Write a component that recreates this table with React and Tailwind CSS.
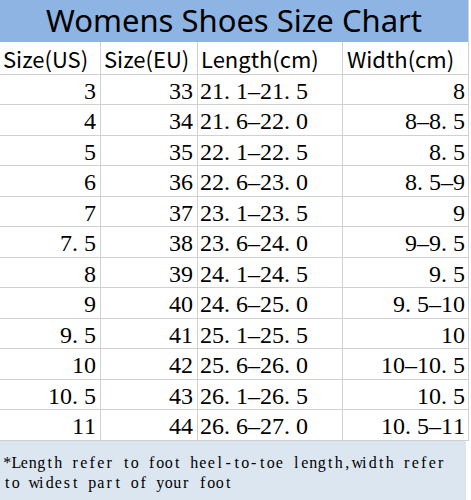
import React from 'react';

const rows = [
  ['3', '33', '21.1-21.5', '8'],
  ['4', '34', '21.6-22.0', '8-8.5'],
  ['5', '35', '22.1-22.5', '8.5'],
  ['6', '36', '22.6-23.0', '8.5-9'],
  ['7', '37', '23.1-23.5', '9'],
  ['7.5', '38', '23.6-24.0', '9-9.5'],
  ['8', '39', '24.1-24.5', '9.5'],
  ['9', '40', '24.6-25.0', '9.5-10'],
  ['9.5', '41', '25.1-25.5', '10'],
  ['10', '42', '25.6-26.0', '10-10.5'],
  ['10.5', '43', '26.1-26.5', '10.5'],
  ['11', '44', '26.6-27.0', '10.5-11'],
];

// SimSun-like fixed-width digits: every char gets a half-width cell
function Mono({ text }) {
  return (
    <span className="inline-flex">
      {text.split('').map((c, i) => (
        <span
          key={i}
          className={c === '.' ? 'inline-block w-[12px] text-left' : 'inline-block w-[12px] text-center'}
        >
          {c === '-' ? '\u2013' : c}
        </span>
      ))}
    </span>
  );
}

// fixed-width serif line for the note
function NoteLine({ text }) {
  return (
    <div className="flex h-[20px] items-center">
      {text.split('').map((c, i) => (
        <span key={i} className="inline-block w-[8.5px] text-center">
          {c === ' ' ? '\u00a0' : c}
        </span>
      ))}
    </div>
  );
}

const serif = { fontFamily: '"Liberation Serif", "Times New Roman", serif' };

export default function App() {
  return (
    <div className="w-[471px] h-[500px] bg-white overflow-hidden text-black">
      <div className="w-[469px] border-r border-[#d0d0d0]">
        {/* Title */}
        <div
          className="h-[42px] bg-[#8db4e2] flex items-center justify-center text-[31px] leading-none pb-[2px]"
          style={{ fontFamily: '"Noto Sans", "Open Sans", sans-serif' }}
        >
          Womens Shoes Size Chart
        </div>

        {/* Header */}
        <div
          className="grid grid-cols-[101px_97px_145px_126px] h-[33px] border-b border-[#d0d0d0] text-[22px] leading-none"
          style={{ fontFamily: '"Noto Sans CJK SC", "Noto Sans", sans-serif' }}
        >
          <div className="border-r border-[#d0d0d0] flex items-center pl-[3px]">Size(US)</div>
          <div className="border-r border-[#d0d0d0] flex items-center pl-[3px]">Size(EU)</div>
          <div className="border-r border-[#d0d0d0] flex items-center pl-[3px]">Length(cm)</div>
          <div className="flex items-center pl-[4px]">Width(cm)</div>
        </div>

        {/* Rows */}
        {rows.map((r, i) => (
          <div
            key={r[0]}
            className={
              (i % 2 === 0 ? 'h-[30px] ' : 'h-[31px] ') +
              'grid grid-cols-[101px_97px_145px_126px] border-b border-[#d0d0d0] text-[24px] leading-none'
            }
            style={serif}
          >
            <div className="border-r border-[#d0d0d0] flex items-center justify-end pr-[4px] pt-[2px]">
              <Mono text={r[0]} />
            </div>
            <div className="border-r border-[#d0d0d0] flex items-center justify-end pr-[4px] pt-[2px]">
              <Mono text={r[1]} />
            </div>
            <div className="border-r border-[#d0d0d0] flex items-center pl-[2px] pt-[2px]">
              <Mono text={r[2]} />
            </div>
            <div className="flex items-center justify-end pr-[4px] pt-[2px]">
              <Mono text={r[3]} />
            </div>
          </div>
        ))}
      </div>

      {/* Note */}
      <div
        className="w-[466px] h-[60px] bg-[#dce6f1] pt-[12px] pl-[3px] text-[16px] leading-none"
        style={serif}
      >
        <NoteLine text="*Length refer to foot heel-to-toe length,width refer" />
        <NoteLine text="to widest part of your foot" />
      </div>
    </div>
  );
}
